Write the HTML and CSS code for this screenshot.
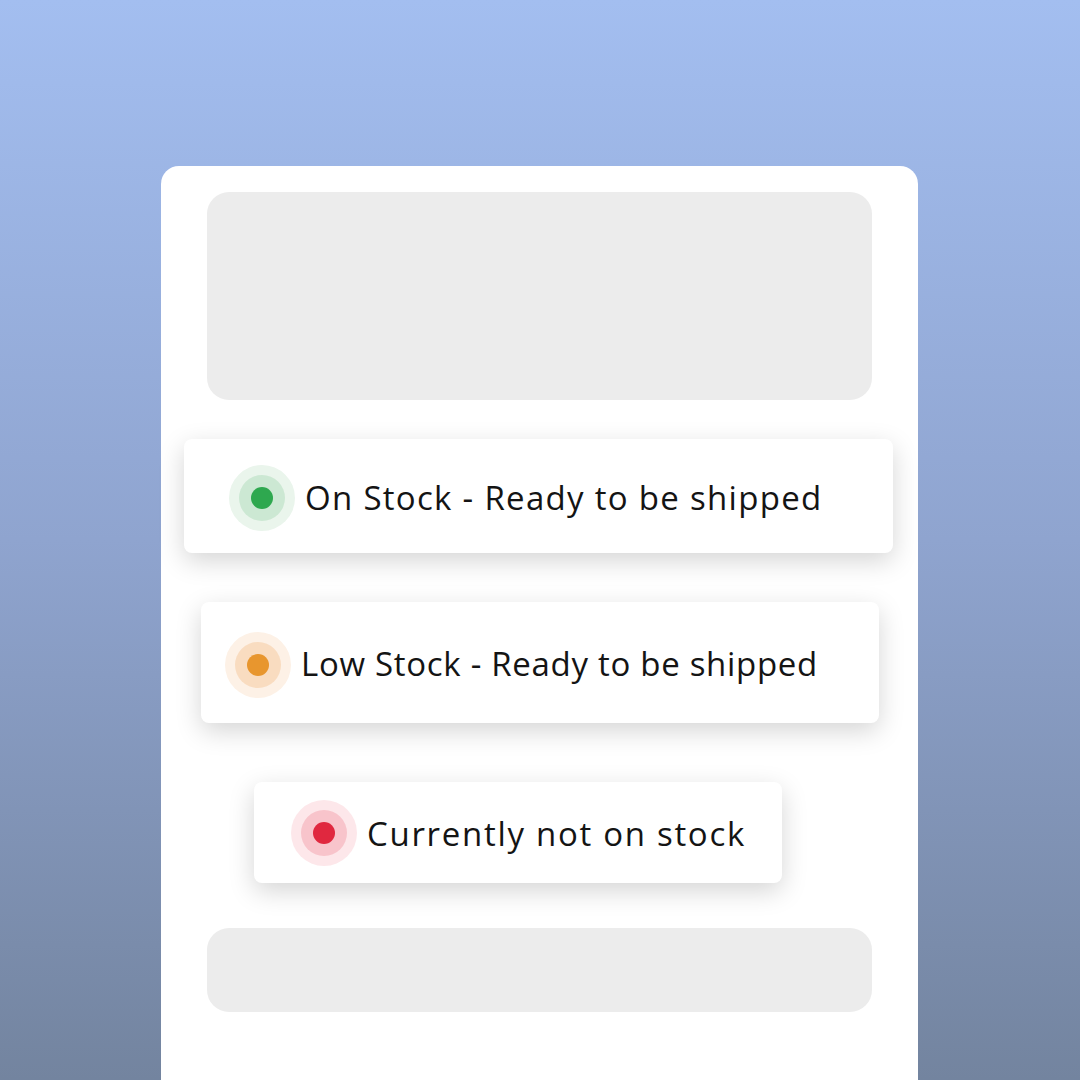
FILE: index.html
```html
<!DOCTYPE html>
<html lang="en">
<head>
  <meta charset="UTF-8" />
  <meta name="viewport" content="width=device-width, initial-scale=1.0" />
  <title>Stock Status</title>
  <link rel="stylesheet" href="styles.css">
</head>
<body>

<div class="pagina">
  <div class="cartao">
    <div class="bloco bloco-topo"></div>

    <div class="estoque estoque-ok">
      <span class="ponto verde"></span>
      <span class="texto">On Stock - Ready to be shipped</span>
    </div>

    <div class="estoque estoque-baixo">
      <span class="ponto laranja"></span>
      <span class="texto">Low Stock - Ready to be shipped</span>
    </div>

    <div class="estoque estoque-zero">
      <span class="ponto vermelho"></span>
      <span class="texto">Currently not on stock</span>
    </div>

    <div class="bloco bloco-base"></div>
  </div>
</div>

</body>
</html>
```

FILE: styles.css
```css
body {
  margin: 0;
  font-family: 'Open Sans', 'Noto Sans', sans-serif;
  overflow: hidden;
}
.pagina {
  width: 1080px;
  height: 1080px;
  background: linear-gradient(180deg, #a3bef0 0%, #8fa4cf 50%, #73849f 100%);
  padding-top: 166px;
  box-sizing: border-box;
  overflow: hidden;
}
.cartao {
  width: 757px;
  height: 960px;
  margin-left: 161px;
  background: white;
  border-radius: 18px;
  padding: 26px 46px;
  box-sizing: border-box;
  display: flex;
  flex-direction: column;
  align-items: flex-start;
}
.bloco {
  width: 665px;
  background: #ececec;
  border-radius: 22px;
}
.bloco-topo {
  height: 208px;
}
.bloco-base {
  height: 84px;
  margin-top: 45px;
}
.estoque {
  display: flex;
  align-items: center;
  gap: 10px;
  background: white;
  border-radius: 8px;
  box-shadow: 0 8px 26px rgba(0, 0, 0, 0.17);
  box-sizing: border-box;
  color: #141414;
  font-size: 33px;
}
.estoque .texto {
  padding-top: 2px;
}
.estoque-ok {
  width: 709px;
  height: 114px;
  margin-top: 39px;
  margin-left: -23px;
  padding-left: 45px;
  letter-spacing: 1.3px;
}
.estoque-baixo {
  width: 678px;
  height: 121px;
  margin-top: 49px;
  margin-left: -6px;
  padding-left: 24px;
  letter-spacing: 0.7px;
}
.estoque-zero {
  width: 528px;
  height: 101px;
  margin-top: 59px;
  margin-left: 47px;
  padding-left: 37px;
  letter-spacing: 1.7px;
}
.estoque-ok .ponto,
.estoque-baixo .ponto {
  margin-top: 4px;
}
.ponto {
  width: 66px;
  height: 66px;
  border-radius: 50%;
  flex-shrink: 0;
  display: flex;
  align-items: center;
  justify-content: center;
}
.ponto::after {
  content: '';
  width: 22px;
  height: 22px;
  border-radius: 50%;
}
.verde {
  background: #eaf5ec;
}
.verde::after {
  background: #2ea84f;
  box-shadow: 0 0 0 12px #cce8d3;
}
.laranja {
  background: #fdf1e6;
}
.laranja::after {
  background: #e8962e;
  box-shadow: 0 0 0 12px #f9dcc0;
}
.vermelho {
  background: #fde7ea;
}
.vermelho::after {
  background: #e0283f;
  box-shadow: 0 0 0 12px #f8c4cb;
}
```
